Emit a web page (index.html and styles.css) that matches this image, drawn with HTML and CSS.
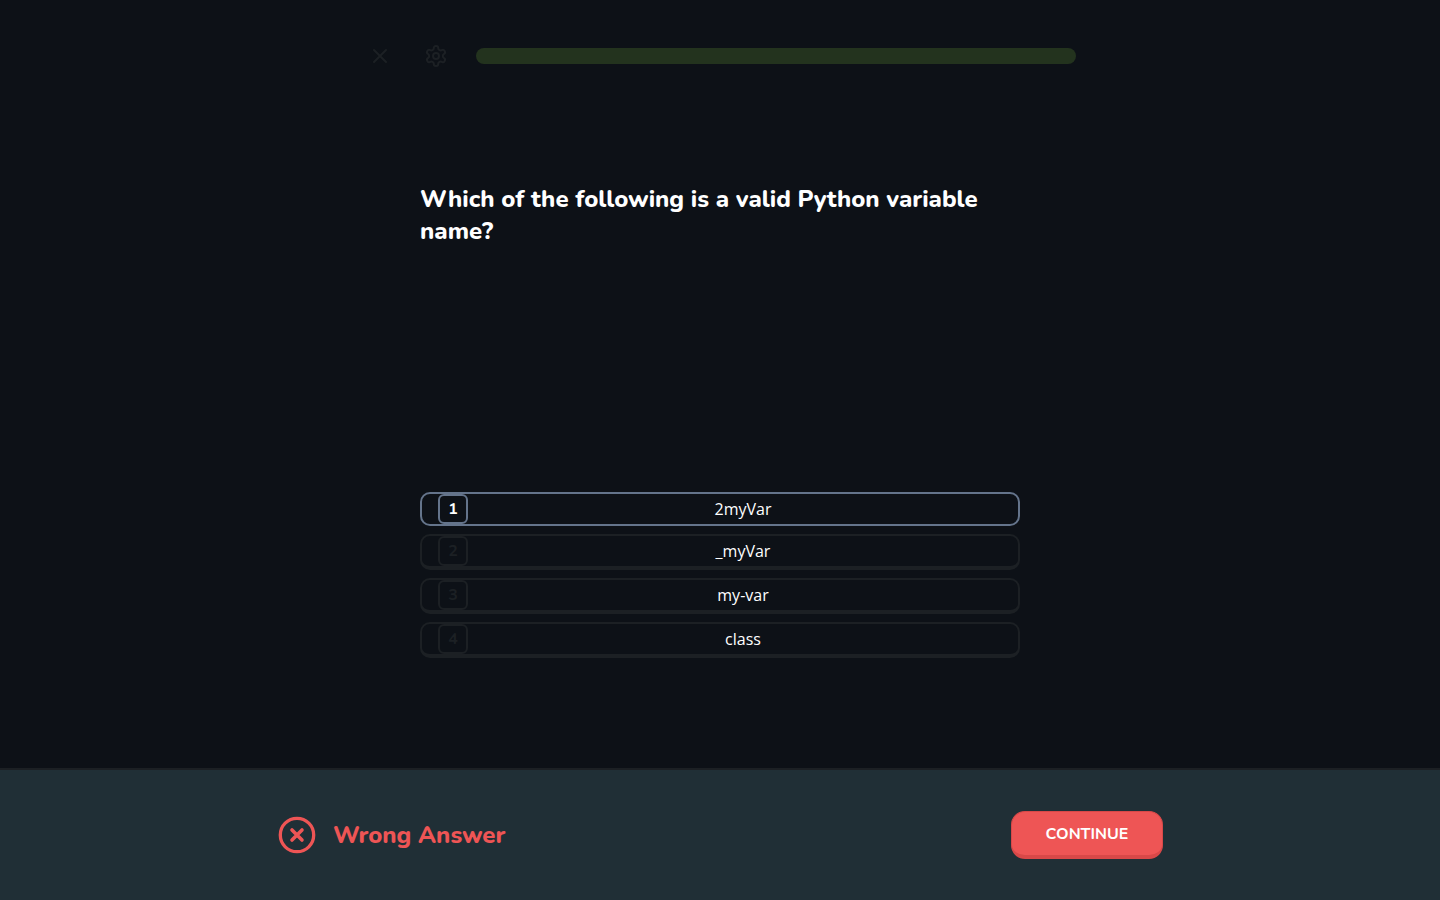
FILE: index.html
```html
<!DOCTYPE html>
<html lang="en">
<head>
<meta charset="utf-8">
<meta name="viewport" content="width=device-width, initial-scale=1">
<title>Python quiz</title>
<link rel="stylesheet" href="styles.css">
</head>
<body>
<div class="page">
  <header class="topbar">
    <button class="icon-button" type="button" aria-label="Close">
      <svg class="icon" viewBox="0 0 24 24"><path d="M18 6 6 18M6 6l12 12"/></svg>
    </button>
    <button class="icon-button" type="button" aria-label="Settings">
      <svg class="icon" viewBox="0 0 24 24"><path d="M12.22 2h-.44a2 2 0 0 0-2 2v.18a2 2 0 0 1-1 1.73l-.43.25a2 2 0 0 1-2 0l-.15-.08a2 2 0 0 0-2.73.73l-.22.38a2 2 0 0 0 .73 2.73l.15.1a2 2 0 0 1 1 1.72v.51a2 2 0 0 1-1 1.74l-.15.09a2 2 0 0 0-.73 2.73l.22.38a2 2 0 0 0 2.73.73l.15-.08a2 2 0 0 1 2 0l.43.25a2 2 0 0 1 1 1.73V20a2 2 0 0 0 2 2h.44a2 2 0 0 0 2-2v-.18a2 2 0 0 1 1-1.73l.43-.25a2 2 0 0 1 2 0l.15.08a2 2 0 0 0 2.73-.73l.22-.39a2 2 0 0 0-.73-2.73l-.15-.08a2 2 0 0 1-1-1.74v-.5a2 2 0 0 1 1-1.74l.15-.09a2 2 0 0 0 .73-2.73l-.22-.38a2 2 0 0 0-2.73-.73l-.15.08a2 2 0 0 1-2 0l-.43-.25a2 2 0 0 1-1-1.73V4a2 2 0 0 0-2-2z"/><circle cx="12" cy="12" r="3"/></svg>
    </button>
    <div class="progress" role="progressbar" aria-label="Lesson progress" aria-valuenow="100"></div>
  </header>
  <main class="quiz">
    <h1 class="question">Which of the following is a valid Python variable name?</h1>
    <div class="options">
      <button class="option option-selected" type="button"><span class="key">1</span><span class="answer">2myVar</span></button>
      <button class="option" type="button"><span class="key">2</span><span class="answer">_myVar</span></button>
      <button class="option" type="button"><span class="key">3</span><span class="answer">my-var</span></button>
      <button class="option" type="button"><span class="key">4</span><span class="answer">class</span></button>
    </div>
  </main>
  <footer class="feedback">
    <div class="feedback-inner">
      <div class="result">
        <svg class="result-icon" viewBox="0 0 40 40"><circle cx="20" cy="20" r="16.7" stroke-width="3.3"/><path d="m15 15 10 10M25 15 15 25" stroke-width="3.6"/></svg>
        <h2 class="result-text">Wrong Answer</h2>
      </div>
      <button class="continue" type="button">CONTINUE</button>
    </div>
  </footer>
</div>
</body>
</html>
```

FILE: styles.css
```css
* {
  box-sizing: border-box;
}

body {
  margin: 0;
  background: #0d1117;
  color: #fff;
  font-family: Nunito, "Open Sans", sans-serif;
}

.page {
  display: flex;
  flex-direction: column;
  min-height: 100vh;
}

button {
  margin: 0;
  padding: 0;
  border: 0;
  background: none;
  color: inherit;
  font-family: inherit;
}

.topbar {
  display: flex;
  align-items: center;
  gap: 16px;
  width: 100%;
  max-width: 720px;
  margin: 0 auto;
  padding-top: 36px;
}

.icon-button {
  display: flex;
  align-items: center;
  justify-content: center;
  width: 40px;
  height: 40px;
  color: #1c2024;
}

.icon {
  width: 24px;
  height: 24px;
  fill: none;
  stroke: currentColor;
  stroke-width: 2;
  stroke-linecap: round;
  stroke-linejoin: round;
}

.progress {
  flex: 1;
  height: 16px;
  margin: 0 4px;
  border-radius: 8px;
  background: #23331e;
}

.quiz {
  display: flex;
  flex: 1;
  flex-direction: column;
  justify-content: space-between;
  width: 100%;
  max-width: 600px;
  margin: 0 auto;
  padding: 107px 0 110px;
}

.question {
  margin: 0;
  font-size: 24px;
  line-height: 32px;
  font-weight: 800;
}

.options {
  display: flex;
  flex-direction: column;
  gap: 8px;
}

.option {
  display: flex;
  align-items: center;
  width: 100%;
  padding-left: 16px;
  border: 2px solid #1c2024;
  border-bottom-width: 4px;
  border-radius: 10px;
  font-family: "Open Sans", sans-serif;
  font-size: 16px;
  line-height: 24px;
}

.option-selected {
  border-color: #64748b;
  border-bottom-width: 2px;
}

.key {
  width: 30px;
  height: 30px;
  border: 2px solid #1c2024;
  border-radius: 6px;
  color: #1c2024;
  font-family: Nunito, "Open Sans", sans-serif;
  font-weight: 700;
  line-height: 26px;
}

.option-selected .key {
  border-color: #64748b;
  color: #fff;
}

.answer {
  flex: 1;
}

.feedback {
  padding: 41px 24px;
  border-top: 2px solid #1c2024;
  background: #202f36;
}

.feedback-inner {
  display: flex;
  align-items: center;
  justify-content: space-between;
  max-width: 886px;
  margin: 0 auto;
}

.result {
  display: flex;
  align-items: center;
  gap: 16px;
  color: #ee5555;
}

.result-icon {
  width: 40px;
  height: 40px;
  fill: none;
  stroke: currentColor;
  stroke-linecap: round;
}

.result-text {
  margin: 0;
  font-size: 24px;
  line-height: 32px;
  font-weight: 800;
}

.continue {
  width: 152px;
  height: 48px;
  border: 1px solid #d84848;
  border-bottom-width: 4px;
  border-radius: 14px;
  background: #ee5555;
  font-size: 16px;
  line-height: 24px;
  font-weight: 700;
}
```
